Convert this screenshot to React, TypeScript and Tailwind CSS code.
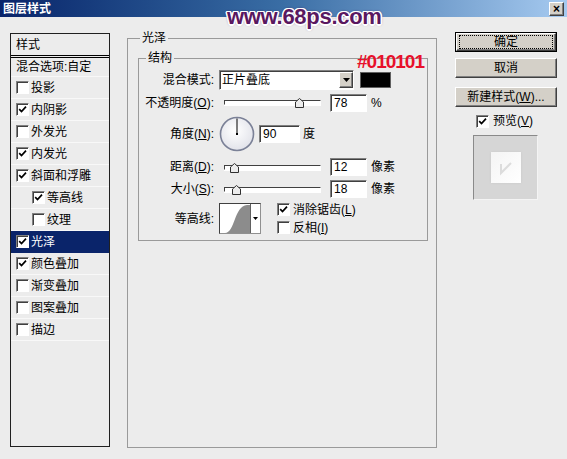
import React from 'react';

const sunken =
  'border border-t-[#808080] border-l-[#808080] border-r-white border-b-white shadow-[inset_1px_1px_0_#404040]';
const raised =
  'bg-[#d4d0c8] border border-t-white border-l-white border-r-[#404040] border-b-[#404040] shadow-[inset_-1px_-1px_0_#808080]';

function Check({ checked }: { checked?: boolean }) {
  return (
    <span className={`inline-flex h-[13px] w-[13px] shrink-0 items-center justify-center bg-white ${sunken}`}>
      {checked && (
        <svg width="9" height="9" viewBox="0 0 9 9">
          <path d="M1.2 4.2 L3.5 6.6 L8 1.6" fill="none" stroke="#000" strokeWidth="1.7" />
        </svg>
      )}
    </span>
  );
}

function Thumb({ left }: { left: number }) {
  return (
    <svg width="9" height="10" viewBox="0 0 9 10" className="absolute top-[-3px]" style={{ left }}>
      <polygon points="0.5,9.5 0.5,4 4.5,0.5 8.5,4 8.5,9.5" fill="#ececec" stroke="#303030" />
    </svg>
  );
}

function Slider({ thumb }: { thumb: number }) {
  return (
    <div className="flex w-[111px] items-center pl-[5px]">
      <div className="relative h-[5px] w-[97px] border border-t-[#404040] border-l-[#404040] border-r-white border-b-white bg-white shadow-[0_1px_0_#fff]">
        <Thumb left={thumb} />
      </div>
    </div>
  );
}

function Field({ value, w = 'w-[37px]' }: { value: string; w?: string }) {
  return (
    <div className={`flex h-[18px] ${w} items-center bg-white pl-[3px] ${sunken}`}>{value}</div>
  );
}

function Label({ children }: { children: React.ReactNode }) {
  return <div className="w-[75px] shrink-0 whitespace-nowrap text-right">{children}</div>;
}

const items: { name: string; checked: boolean; sub?: boolean; active?: boolean }[] = [
  { name: '投影', checked: false },
  { name: '内阴影', checked: true },
  { name: '外发光', checked: false },
  { name: '内发光', checked: true },
  { name: '斜面和浮雕', checked: true },
  { name: '等高线', checked: true, sub: true },
  { name: '纹理', checked: false, sub: true },
  { name: '光泽', checked: true, active: true },
  { name: '颜色叠加', checked: true },
  { name: '渐变叠加', checked: false },
  { name: '图案叠加', checked: false },
  { name: '描边', checked: false },
];

export default function App() {
  return (
    <div className="relative h-[459px] w-[567px] overflow-hidden bg-[#ececec] font-['Liberation_Sans','Noto_Sans_CJK_SC',sans-serif] text-[12px] leading-[14px] text-black">
      {/* title bar */}
      <div className="flex h-[17px] items-center justify-between bg-gradient-to-r from-[#0a246a] via-[#3a6ea5] to-[#a6caf0] pl-[3px] pr-[3px]">
        <span className="font-bold text-white">图层样式</span>
        <span className={`flex h-[14px] w-[15px] items-center justify-center text-[12px] font-bold leading-none ${raised}`}>×</span>
      </div>

      <div className="flex pl-[10px] pt-[14px]">
        {/* style list */}
        <div className="mt-[2px] flex h-[414px] w-[100px] flex-col border border-[#202020]">
          <div className="flex h-[24px] items-center border-b-[3px] border-double border-black pl-[5px]">样式</div>
          <div className="flex h-[19px] items-center border-b border-[#f8f8f8] pl-[5px]">混合选项:自定</div>
          {items.map((it) => (
            <div
              key={it.name}
              className={`flex h-[22px] items-center gap-[2px] border-b ${
                it.active ? 'border-[#0a246a] bg-[#0a246a] text-white' : 'border-[#f8f8f8]'
              } ${it.sub ? 'pl-[21px]' : 'pl-[5px]'}`}
            >
              <Check checked={it.checked} />
              <span>{it.name}</span>
            </div>
          ))}
        </div>

        {/* main group */}
        <fieldset className="ml-[17px] h-[417px] w-[310px] border border-[#9a9a9a]">
          <legend className="ml-[12px] px-[2px]">光泽</legend>
          <fieldset className="ml-[10px] mt-[6px] w-[290px] border border-[#9a9a9a] pb-[6px]">
            <legend className="ml-[7px] px-[2px]">结构</legend>

            <div className="mt-[5px] flex h-[20px] items-center">
              <Label>混合模式:</Label>
              <div className={`ml-[5px] flex h-[20px] w-[135px] items-center justify-between bg-white pl-[2px] ${sunken}`}>
                <span>正片叠底</span>
                <span className={`flex h-[16px] w-[14px] items-center justify-center ${raised}`}>
                  <svg width="7" height="4" viewBox="0 0 7 4">
                    <polygon points="0,0 7,0 3.5,4" fill="#000" />
                  </svg>
                </span>
              </div>
              <div className="ml-[6px] h-[16px] w-[31px] border border-[#606060] bg-[#010101]" />
            </div>

            <div className="mt-[3px] flex h-[19px] items-center">
              <Label>
                不透明度(<u>O</u>):
              </Label>
              <div className="ml-[5px]" />
              <Slider thumb={70} />
              <Field value="78" />
              <span className="ml-[4px]">%</span>
            </div>

            <div className="mt-[4px] flex h-[36px] items-center">
              <Label>
                角度(<u>N</u>):
              </Label>
              <svg width="36" height="36" viewBox="0 0 36 36" className="ml-[5px]">
                <defs>
                  <radialGradient id="dial" cx="0.45" cy="0.4" r="0.6">
                    <stop offset="0" stopColor="#ffffff" />
                    <stop offset="1" stopColor="#e2e3ea" />
                  </radialGradient>
                </defs>
                <circle cx="18" cy="18" r="16.5" fill="url(#dial)" stroke="#7b8197" strokeWidth="1.6" />
                <line x1="18" y1="18" x2="18" y2="2.5" stroke="#000" strokeWidth="1" />
                <rect x="17" y="17" width="2" height="2" fill="#000" />
              </svg>
              <div className="ml-[4px]">
                <Field value="90" w="w-[41px]" />
              </div>
              <span className="ml-[3px]">度</span>
            </div>

            <div className="mt-[6px] flex h-[18px] items-center">
              <Label>
                距离(<u>D</u>):
              </Label>
              <div className="ml-[5px]" />
              <Slider thumb={5} />
              <Field value="12" />
              <span className="ml-[4px]">像素</span>
            </div>

            <div className="mt-[4px] flex h-[18px] items-center">
              <Label>
                大小(<u>S</u>):
              </Label>
              <div className="ml-[5px]" />
              <Slider thumb={7} />
              <Field value="18" />
              <span className="ml-[4px]">像素</span>
            </div>

            <div className="mt-[5px] flex h-[31px] items-center">
              <Label>等高线:</Label>
              <div className="ml-[5px] flex h-[31px] w-[42px] border border-t-[#404040] border-l-[#404040] border-r-[#909090] border-b-[#909090] bg-white">
                <svg width="31" height="29" viewBox="0 0 31 29">
                  <path d="M5 29 C15 29 14 2 27 1 L31 1 L31 29 Z" fill="#8c8c8c" />
                  <line x1="30.5" y1="0" x2="30.5" y2="29" stroke="#606060" />
                </svg>
                <div className="flex flex-1 items-center justify-center">
                  <svg width="5" height="3" viewBox="0 0 5 3">
                    <polygon points="0,0 5,0 2.5,3" fill="#000" />
                  </svg>
                </div>
              </div>
              <div className="ml-[16px] flex flex-col gap-[4px]">
                <div className="flex items-center gap-[3px]">
                  <Check checked />
                  <span>
                    消除锯齿(<u>L</u>)
                  </span>
                </div>
                <div className="flex items-center gap-[3px]">
                  <Check />
                  <span>
                    反相(<u>I</u>)
                  </span>
                </div>
              </div>
            </div>
          </fieldset>
        </fieldset>

        {/* buttons */}
        <div className="ml-[18px] mt-[1px] flex w-[102px] flex-col">
          <div className="h-[20px] border border-black">
            <div className={`flex h-full items-center justify-center ${raised}`}>
              <span className="border border-dotted border-black px-[34px] leading-[12px]">确定</span>
            </div>
          </div>
          <div className={`mt-[6px] flex h-[20px] items-center justify-center ${raised}`}>取消</div>
          <div className={`mt-[9px] flex h-[20px] items-center justify-center ${raised}`}>
            新建样式(<u>W</u>)...
          </div>
          <div className="ml-[21px] mt-[7px] flex h-[14px] items-center gap-[4px]">
            <Check checked />
            <span>
              预览(<u>V</u>)
            </span>
          </div>
          <div className="ml-[18px] mt-[7px] flex h-[65px] w-[65px] items-center justify-center border border-t-[#8a8a8a] border-l-[#8a8a8a] border-r-[#f4f4f4] border-b-[#f4f4f4] bg-[#d6d6d6]">
            <div className="flex h-[31px] w-[30px] items-center justify-center bg-gradient-to-br from-[#f4f4f4] to-[#ffffff] shadow-[0_0_2px_#c8c8c8]">
              <svg width="20" height="20" viewBox="0 0 20 20">
                <path d="M5 6 L5 15 L15 5" fill="none" stroke="#dcdcdc" strokeWidth="2" />
              </svg>
            </div>
          </div>
        </div>
      </div>

      {/* annotation */}
      <div className="absolute left-[357px] top-[52px] text-[19px] font-bold leading-[20px] tracking-[-1px] text-[#e8102a]">
        #010101
      </div>

      {/* watermark */}
      <div className="absolute left-[227px] top-[5px] font-['Liberation_Sans',sans-serif] text-[22px] font-bold leading-[24px] tracking-[-0.3px] text-[#5a1860] [text-shadow:1.5px_0_0_#fff,-1.5px_0_0_#fff,0_1.5px_0_#fff,0_-1.5px_0_#fff,1px_1px_0_#fff,-1px_-1px_0_#fff,1px_-1px_0_#fff,-1px_1px_0_#fff,0_0_3px_#4a0f50]">
        www.68ps.com
      </div>
    </div>
  );
}
